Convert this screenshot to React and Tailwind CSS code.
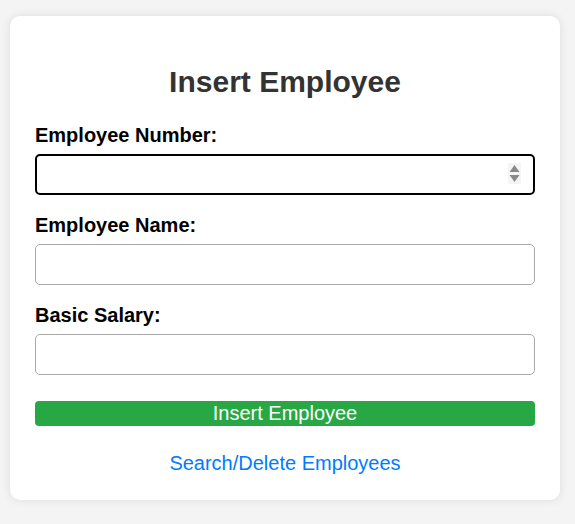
const Field = ({ label, focused, number }) => (
  <div className="mb-[19px]">
    <label className="block text-[20px] font-bold text-black leading-[23px] mb-[7px]">{label}</label>
    <div className="relative">
      <input
        type="text"
        className={
          "block w-full h-[41px] rounded-[5px] bg-white px-[10px] text-[16px] outline-none " +
          (focused ? "border-2 border-black" : "border border-[#aaaaaa]")
        }
      />
      {number && (
        <svg className="absolute right-[14px] top-[9px]" width="13" height="21" viewBox="0 0 13 21">
          <rect x="0" y="0" width="13" height="21" fill="#f5f5f5" />
          <path d="M6.5 2 L11.5 9 L1.5 9 Z" fill="#8a8a8a" />
          <path d="M1.5 12 L11.5 12 L6.5 19 Z" fill="#8a8a8a" />
        </svg>
      )}
    </div>
  </div>
);

const App = () => {
  return (
    <div className="min-h-[524px] bg-[#f4f4f4] pt-[16px] pl-[10px] font-['Liberation_Sans',Arial,sans-serif]">
      <div className="w-[550px] rounded-[10px] bg-white px-[25px] pt-[25px] pb-[23px] shadow-[0_0_10px_rgba(0,0,0,0.1)]">
        <h2 className="mt-[23px] mb-[25px] text-center text-[30px] font-bold leading-[35px] text-[#333333]">
          Insert Employee
        </h2>
        <Field label="Employee Number:" focused number />
        <Field label="Employee Name:" />
        <Field label="Basic Salary:" />
        <button className="mt-[26px] block w-full h-[25px] rounded-[4px] bg-[#28a745] text-[20px] leading-[23px] text-white">
          Insert Employee
        </button>
        <div className="mt-[26px] text-center">
          <a href="#" className="text-[20px] leading-[23px] text-[#007bff]">
            Search/Delete Employees
          </a>
        </div>
      </div>
    </div>
  );
};

export default App;
